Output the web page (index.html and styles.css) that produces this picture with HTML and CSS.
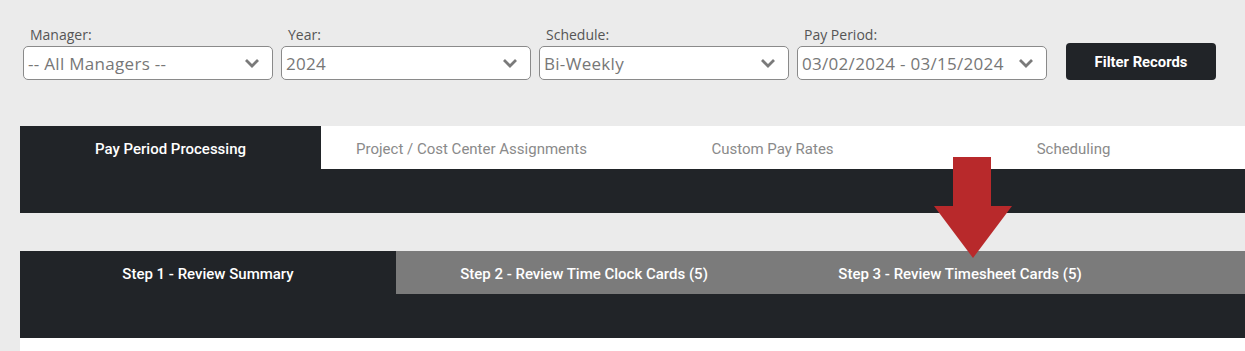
FILE: index.html
```html
<!DOCTYPE html>
<html>
<head>
<meta charset="utf-8">
<link rel="stylesheet" href="styles.css">
</head>
<body>
<div class="filters">
  <div class="field">
    <label class="label">Manager:</label>
    <div class="select"><span>-- All Managers --</span><svg class="chev" viewBox="0 0 16 10" width="16" height="10"><path d="M2 2 L8 8 L14 2" fill="none" stroke="#7a7a7a" stroke-width="2.8"/></svg></div>
  </div>
  <div class="field">
    <label class="label">Year:</label>
    <div class="select"><span>2024</span><svg class="chev" viewBox="0 0 16 10" width="16" height="10"><path d="M2 2 L8 8 L14 2" fill="none" stroke="#7a7a7a" stroke-width="2.8"/></svg></div>
  </div>
  <div class="field">
    <label class="label">Schedule:</label>
    <div class="select"><span>Bi-Weekly</span><svg class="chev" viewBox="0 0 16 10" width="16" height="10"><path d="M2 2 L8 8 L14 2" fill="none" stroke="#7a7a7a" stroke-width="2.8"/></svg></div>
  </div>
  <div class="field">
    <label class="label">Pay Period:</label>
    <div class="select"><span>03/02/2024 - 03/15/2024</span><svg class="chev" viewBox="0 0 16 10" width="16" height="10"><path d="M2 2 L8 8 L14 2" fill="none" stroke="#7a7a7a" stroke-width="2.8"/></svg></div>
  </div>
  <button class="btn">Filter Records</button>
</div>

<div class="panel">
  <div class="tabs">
    <div class="tab active">Pay Period Processing</div>
    <div class="tab">Project / Cost Center Assignments</div>
    <div class="tab">Custom Pay Rates</div>
    <div class="tab">Scheduling</div>
  </div>
  <div class="darkbar"></div>
</div>

<div class="panel steps-panel">
  <div class="steps">
    <div class="step active">Step 1 - Review Summary</div>
    <div class="step">Step 2 - Review Time Clock Cards (5)</div>
    <div class="step">Step 3 - Review Timesheet Cards (5)</div>
  </div>
  <div class="darkbar"></div>
  <div class="content"></div>
</div>

<svg class="arrow" viewBox="0 0 78 101" width="78" height="101"><polygon points="19,0 57,0 57,49 78,49 39,101 0,49 19,49" fill="#b8292b"/></svg>
</body>
</html>
```

FILE: styles.css
```css
* { box-sizing: border-box; }
body {
  margin: 0;
  background: #ebebeb;
  font-family: Roboto, "Liberation Sans", sans-serif;
  position: relative;
  overflow: hidden;
}
.filters {
  display: flex;
  align-items: flex-end;
  gap: 8px;
  padding: 26px 0 0 23px;
}
.field {
  display: flex;
  flex-direction: column;
  width: 250px;
}
.label {
  font-family: "Open Sans", sans-serif;
  font-size: 14px;
  color: #555;
  margin: 0 0 2px 7px;
  line-height: 18px;
}
.select {
  height: 34px;
  background: #fff;
  border: 1px solid #8a8a8a;
  border-radius: 5px;
  display: flex;
  align-items: center;
  justify-content: space-between;
  padding: 0 12px 0 4px;
  font-family: "Open Sans", sans-serif;
  font-size: 17px;
  letter-spacing: 0.3px;
  color: #777;
}
.chev { display: block; }
.btn {
  margin-left: 11px;
  width: 150px;
  height: 37px;
  background: #212428;
  color: #fff;
  border: none;
  border-radius: 4px;
  font-family: Roboto, sans-serif;
  font-weight: 700;
  font-size: 14.8px;
}
.panel {
  margin: 46px 0 0 20px;
}
.tabs {
  display: flex;
  background: #fff;
  height: 43px;
}
.tab {
  flex: 0 0 301px;
  display: flex;
  align-items: center;
  justify-content: center;
  font-size: 15px;
  color: #8a8a8a;
  padding-top: 2px;
}
.tab.active {
  background: #212428;
  color: #fff;
  font-weight: 500;
}
.darkbar {
  height: 44px;
  background: #212428;
}
.steps-panel { margin-top: 38px; }
.steps {
  display: flex;
  background: #7b7b7b;
  height: 43px;
}
.step {
  flex: 0 0 376px;
  display: flex;
  align-items: center;
  justify-content: center;
  font-size: 15px;
  font-weight: 500;
  color: #fff;
  padding-top: 2px;
}
.step.active { background: #212428; }
.content {
  height: 40px;
  background: #fff;
}
.arrow {
  position: absolute;
  left: 934px;
  top: 157px;
}
```
